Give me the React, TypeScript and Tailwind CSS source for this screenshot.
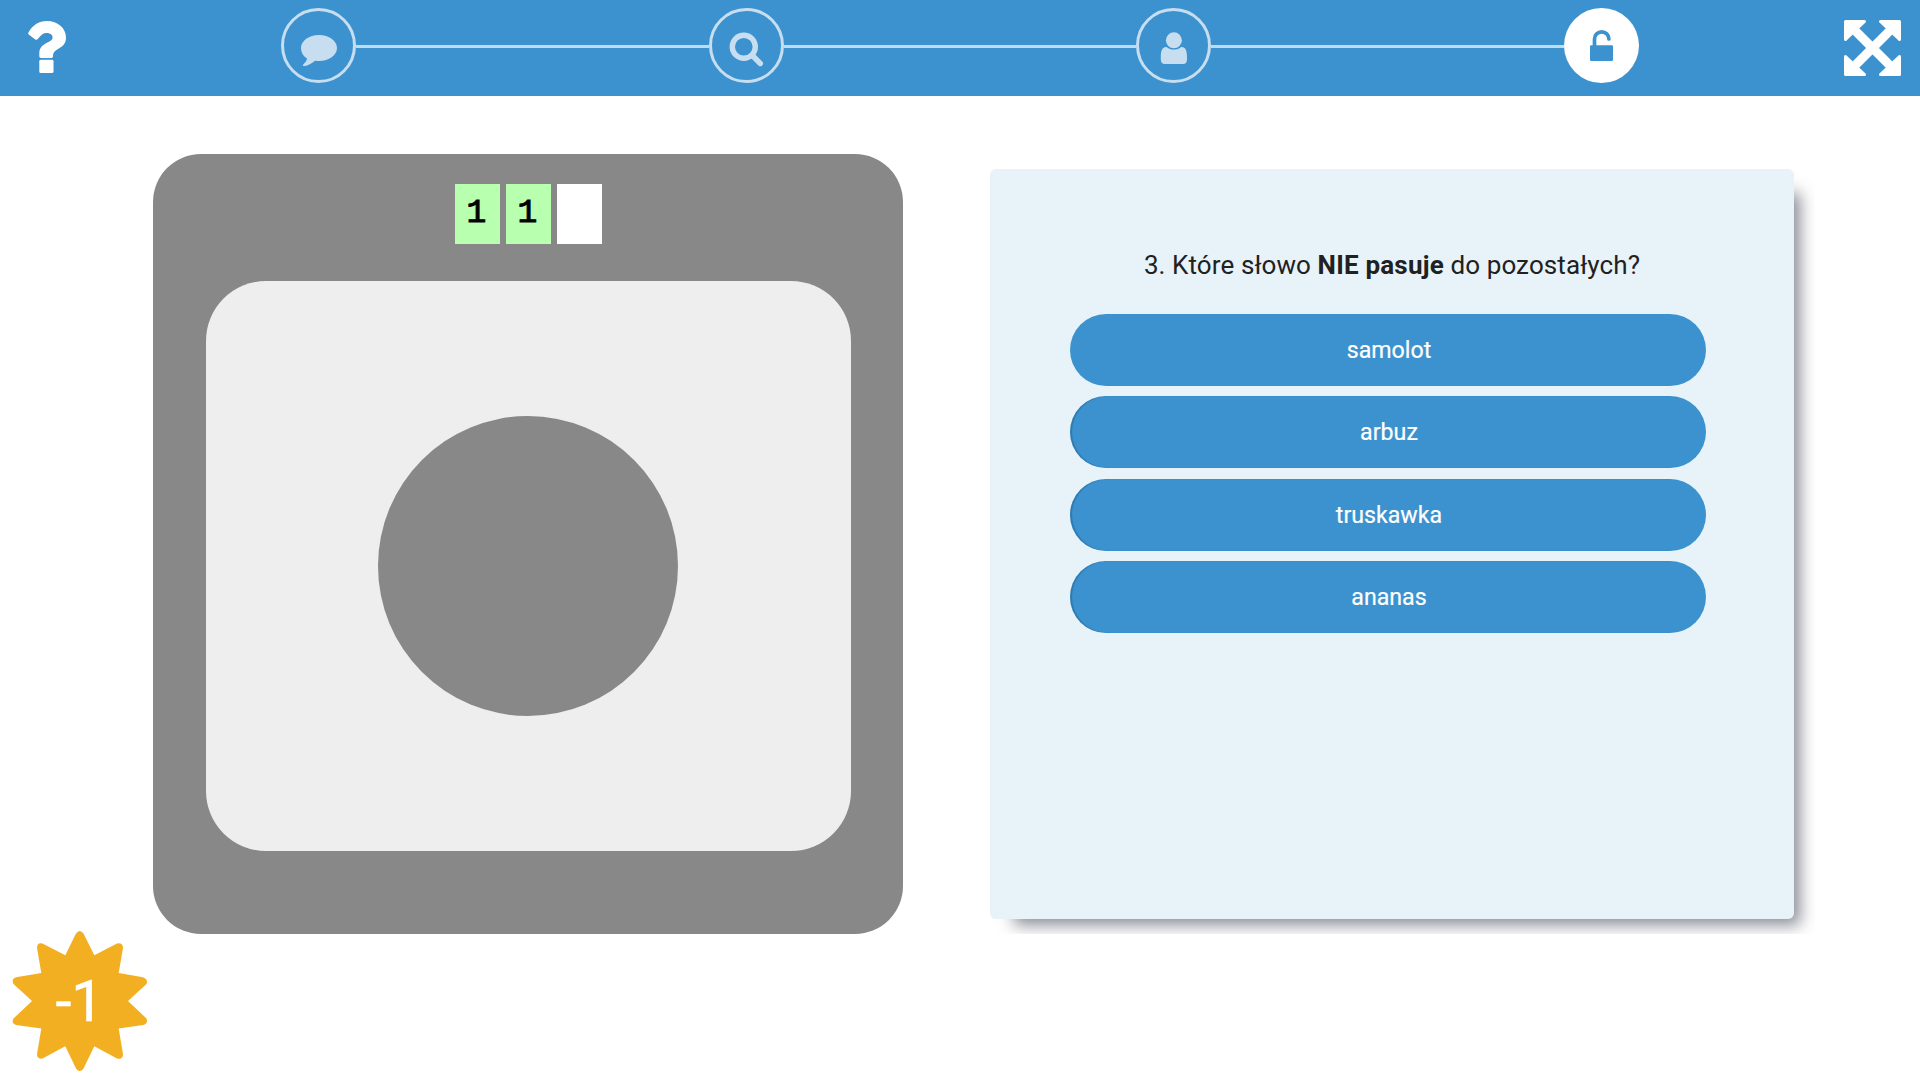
import React from "react";

const answers = ["samolot", "arbuz", "truskawka", "ananas"];
const code = ["1", "1", ""];

function CommentIcon() {
  return (
    <svg className="h-[75px] w-[75px] shrink-0" viewBox="0 0 75 75" fill="currentColor">
      <path d="M38 27C48 27 56 32.800 56 40C56 47.300 48 53 38 53Q36 53 34 52.700C30.500 55.500 27 57.500 23.500 58C21.500 58 21.500 57 22.500 56.200C24.500 54.500 25.800 52.500 26 50.500C22 48 20 44.500 20 40C20 32.800 28 27 38 27Z" />
    </svg>
  );
}

function SearchIcon() {
  return (
    <svg className="h-[75px] w-[75px] shrink-0" viewBox="0 0 75 75" fill="none" stroke="currentColor">
      <circle cx="34.800" cy="38.700" r="11.500" strokeWidth="5.400" />
      <path d="M43.400 47.500L51.300 55.500" strokeWidth="5.400" strokeLinecap="round" />
    </svg>
  );
}

function UserIcon() {
  return (
    <svg className="h-[75px] w-[75px] shrink-0" viewBox="0 0 75 75" fill="currentColor">
      <circle cx="37.900" cy="32.300" r="8" />
      <path d="M30.500 39C34.200 42.400 41.600 42.400 45.300 39C49.200 38.600 51 42 51 49V51.500C51 54.500 49.500 56 47.200 56H28.700C26.400 56 24.800 54.500 24.800 51.500V49C24.800 42 26.700 38.600 30.500 39Z" />
    </svg>
  );
}

function UnlockIcon() {
  return (
    <svg className="h-[75px] w-[75px]" viewBox="0 0 75 75" fill="none">
      <path d="M30.500 38.500V31A7.200 7.200 0 0 1 44.900 31" stroke="currentColor" strokeWidth="3.700" strokeLinecap="round" />
      <rect x="26" y="37.300" width="23" height="15.700" rx="1.200" fill="currentColor" />
    </svg>
  );
}

function QuestionIcon() {
  return (
    <svg className="h-[54px] w-[40px]" viewBox="27 20 40 54" fill="#fff">
      <path d="M28.600 32.200C32.500 25.500 38.500 21 47 21C57.500 21 66 28 66 37.500C66 44 62.500 46.500 58 49C54.500 51 53 52.500 53 56Q53 58 51.500 58H41Q39.300 58 39.300 56.300V53.500C39.300 47.500 43 44.800 47 42.800C50.800 41 52.600 39.800 52.600 37.500C52.600 34.700 50 33 46.500 33C43 33 41 35 38.200 38.500Q36.800 40.500 35.300 39.500L28.700 34.500Q27.600 33.500 28.600 32.200Z" />
      <rect x="39.300" y="59.800" width="14.200" height="13.200" rx="1.500" />
    </svg>
  );
}

function ExpandIcon() {
  return (
    <svg className="h-[56px] w-[57px]" viewBox="0 0 57 56" fill="#fff" stroke="#fff">
      <g strokeWidth="9" strokeLinecap="butt">
        <path d="M11 10.500L46 45.500M46 10.500L11 45.500" />
      </g>
      <g strokeWidth="3" strokeLinejoin="round">
        <path d="M1.500 1.500H20.500L1.500 19.500Z" />
        <path d="M55.500 1.500H36.500L55.500 19.500Z" />
        <path d="M1.500 54.500H20.500L1.500 36.500Z" />
        <path d="M55.500 54.500H36.500L55.500 36.500Z" />
      </g>
    </svg>
  );
}

function Step({ active = false, children }: { active?: boolean; children: React.ReactNode }) {
  return (
    <div
      className={
        active
          ? "h-[75px] w-[75px] shrink-0 overflow-hidden rounded-full bg-white text-[#3c92ce]"
          : "flex h-[75px] w-[75px] shrink-0 items-center justify-center overflow-hidden rounded-full border-[3px] border-[#c6def0] text-[#c6def0]"
      }
    >
      {children}
    </div>
  );
}

function Connector() {
  return <div className="mt-[2px] h-[3px] flex-1 bg-[#bddcf0]" />;
}

function Score() {
  return (
    <div className="fixed bottom-[8px] left-[12px] grid h-[142px] w-[136px] place-items-center">
      <svg className="col-start-1 row-start-1 h-[142px] w-[136px]" viewBox="12 930 136 142">
        <path
          d="M76 933.500Q79.700 928.500 83.500 933.500L94.300 955.300L117 943.500Q123 942.500 123 948L118.700 973L143 977.200Q148.500 979.500 146.500 984L128 1001L146.500 1018.500Q148.500 1023.500 143 1025L118.700 1028.500L123 1054Q123 1060 117 1058.500L94.300 1046.300L83.500 1068.500Q79.700 1073.500 76 1068.500L65.300 1046.300L42.500 1058.500Q37 1059.500 37 1054L41.300 1028.500L16 1025Q11 1023 13.500 1018.500L32 1001L13.500 984Q11 979 16 977.200L41.300 973L37 948Q37 942 42.500 943.500L65.300 955.300Z"
          fill="#f3af22"
        />
      </svg>
      <span className="col-start-1 row-start-1 mt-px mr-px font-['Roboto',sans-serif] text-[57.500px] leading-none text-white [-webkit-text-stroke:0.5px_white]">-1</span>
    </div>
  );
}

export default function App() {
  return (
    <div className="h-[1080px] w-[1920px] overflow-hidden bg-white font-['Roboto',sans-serif]">
      <header className="flex h-24 justify-between bg-[#3c92ce]">
        <div className="w-[281px] pt-[20px] pl-[27px]">
          <QuestionIcon />
        </div>
        <nav className="mt-2 flex h-[75px] w-[1358px] items-center">
          <Step><CommentIcon /></Step>
          <Connector />
          <Step><SearchIcon /></Step>
          <Connector />
          <Step><UserIcon /></Step>
          <Connector />
          <Step active><UnlockIcon /></Step>
        </nav>
        <div className="flex w-[281px] justify-end pt-[20px] pr-[19px]">
          <ExpandIcon />
        </div>
      </header>

      <main className="flex pl-[153px]">
        <section className="mt-[58px] flex h-[780px] w-[750px] flex-col items-center rounded-[48px] bg-[#888] pt-[30px]">
          <div className="flex gap-1.5">
            {code.map((digit, i) => (
              <div
                key={i}
                className={
                  digit
                    ? "h-[60px] w-[45px] bg-[#b9ffb0] pr-px text-center font-['Liberation_Mono',monospace] text-[33px] leading-[59px] text-black [-webkit-text-stroke:1px_black]"
                    : "h-[60px] w-[45px] bg-white"
                }
              >
                {digit}
              </div>
            ))}
          </div>
          <div className="mt-[37px] flex h-[570px] w-[645px] items-center justify-center rounded-[60px] bg-[#eee]">
            <div className="h-[300px] w-[300px] rounded-full bg-[#888]" />
          </div>
        </section>

        <div className="ml-[72px] h-[838px] w-[840px] overflow-hidden pt-[73px] pl-[15px]">
          <section className="h-[750px] w-[804px] rounded-[6px] bg-[#e7f3f9] px-20 pt-[76px] shadow-[15px_15px_15px_-9px_rgba(60,64,80,0.6)]">
            <p className="text-center text-[26px] leading-[41px] tracking-[0.1px] whitespace-nowrap text-[#212121]">
              3. Które słowo <strong className="font-bold tracking-[0.2px]">NIE pasuje</strong> do pozostałych?
            </p>
            <div className="mt-[28px] flex w-[636px] flex-col gap-[10.400px]">
              {answers.map((answer, i) => (
                <button
                  key={answer}
                  className={
                    i === 0
                      ? "h-[72px] w-full rounded-full bg-[#3c92ce] pt-px pl-[2px] text-[23.200px] text-white [-webkit-text-stroke:0.2px_white]"
                      : "h-[72px] w-full rounded-full bg-[#3c92ce] pt-px pl-[2px] text-[23.200px] text-white shadow-[inset_2px_0_1px_rgba(0,50,90,0.25)] [-webkit-text-stroke:0.2px_white]"
                  }
                >
                  {answer}
                </button>
              ))}
            </div>
          </section>
        </div>
      </main>
      <Score />
    </div>
  );
}
